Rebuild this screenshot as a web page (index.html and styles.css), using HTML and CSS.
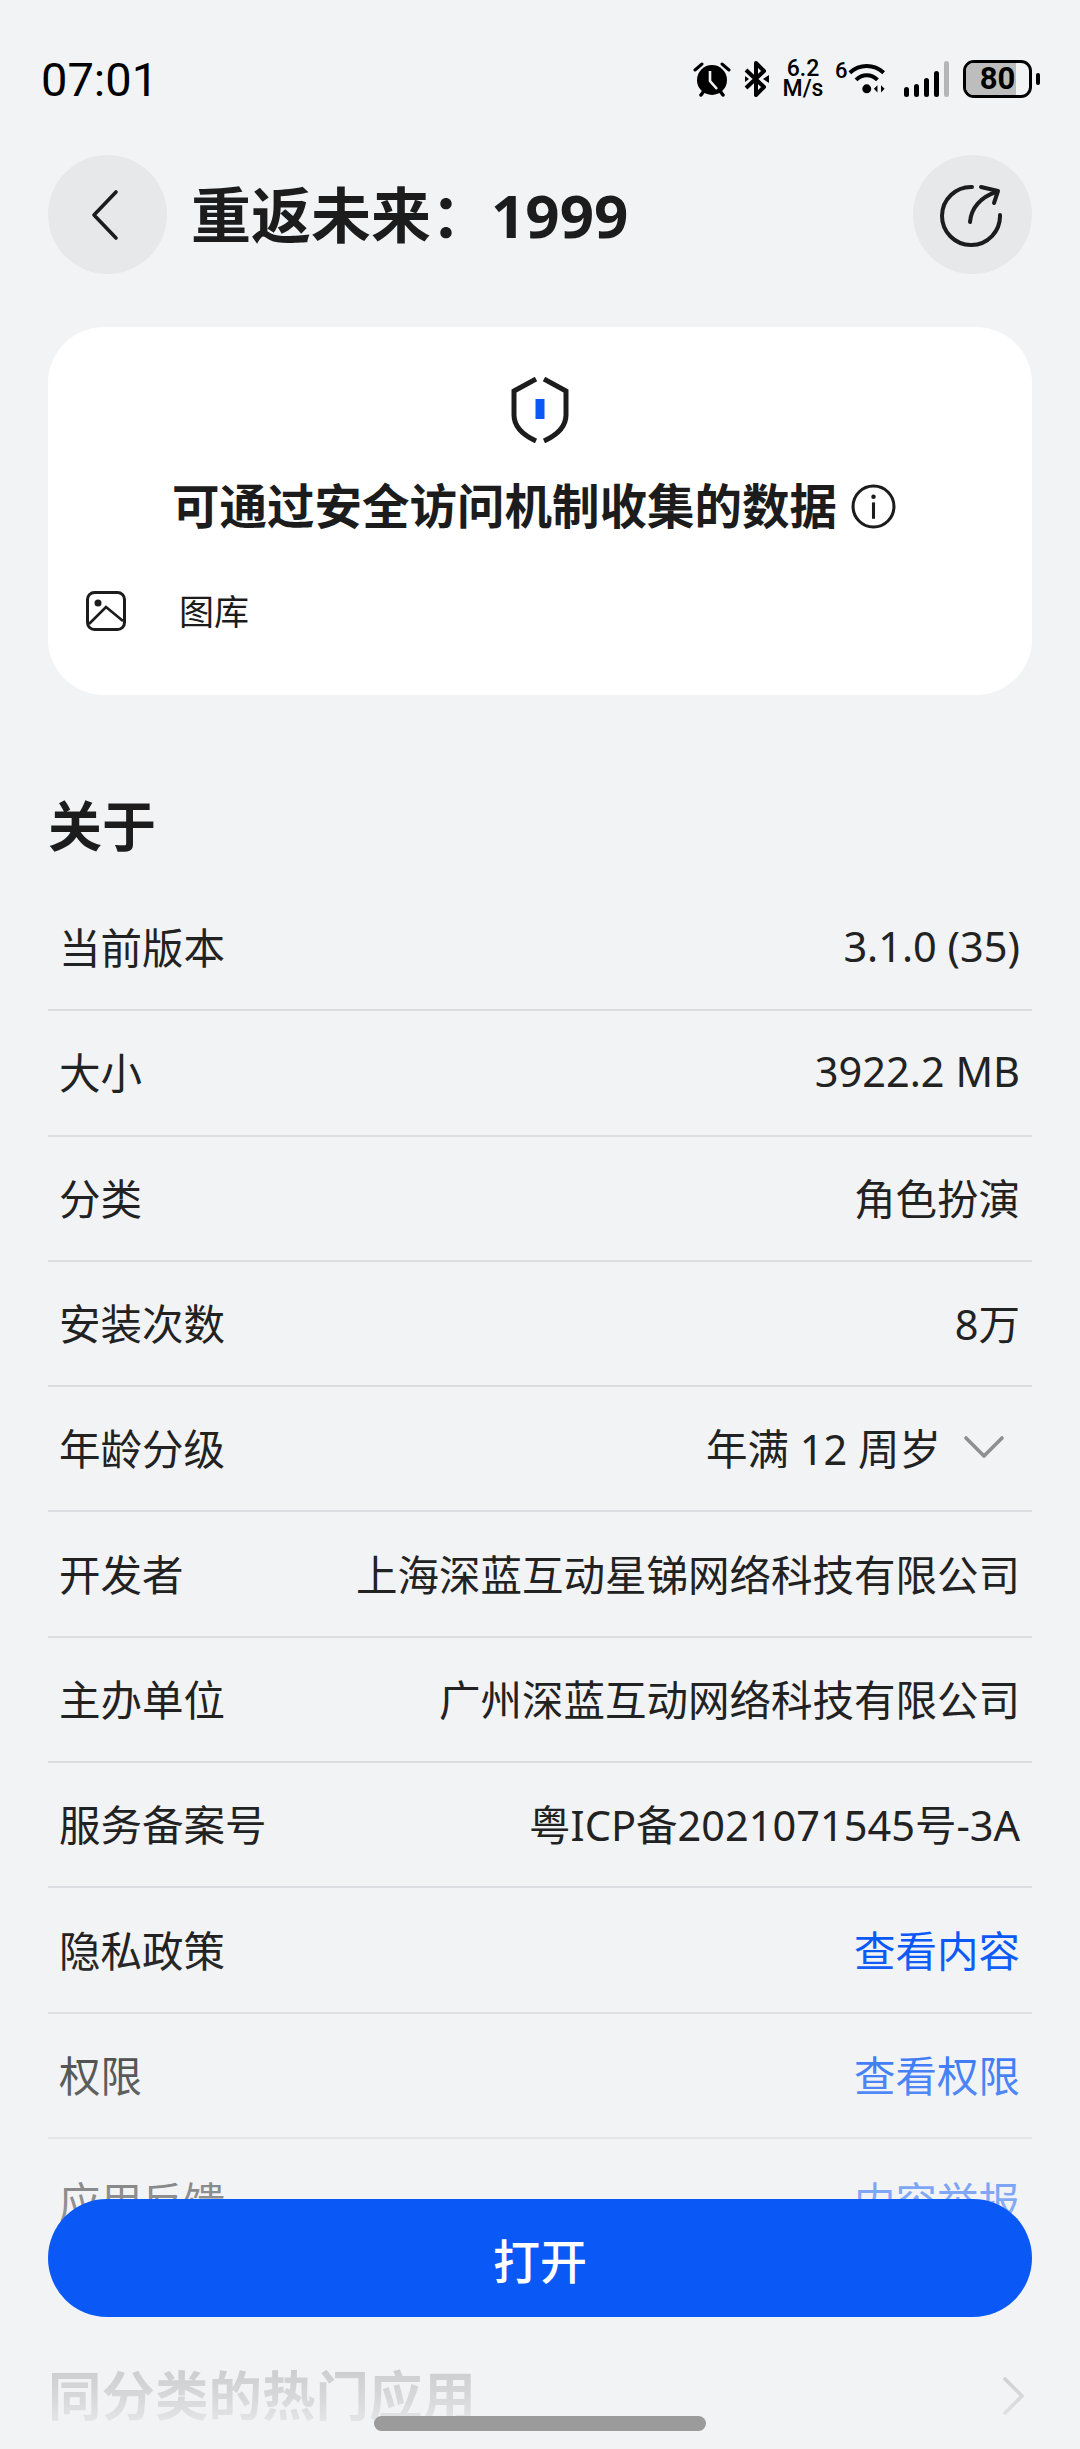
FILE: index.html
```html
<!DOCTYPE html>
<html lang="zh-CN">
<head>
  <meta charset="UTF-8" />
  <meta name="viewport" content="width=device-width, initial-scale=1.0"/>
  <title>重返未来：1999</title>
  <link rel="stylesheet" href="styles.css">
</head>
<body>
  <div class="page">
    <header class="status-bar">
      <span class="time">07:01</span>
      <div class="status-icons">
        <svg class="ic-alarm" viewBox="0 0 38 36">
          <path d="M2 9 L9 3 M36 9 L29 3" stroke="#000" stroke-width="3" stroke-linecap="round"/>
          <circle cx="19" cy="19" r="15" fill="#000"/>
          <path d="M8 34 L11 30 M30 34 L27 30" stroke="#000" stroke-width="3.5" stroke-linecap="round"/>
          <path d="M17 10 V20 L24 28" fill="none" stroke="#f1f3f5" stroke-width="2.6"/>
        </svg>
        <svg class="ic-bt" viewBox="0 0 27 36">
          <path d="M3 9 L21 26 L13 34 V2 L21 10 L3 27" fill="none" stroke="#000" stroke-width="4" stroke-linejoin="round"/>
          <path d="M20 18 L26 14 V22 Z M2 15 L6 18 L2 21 Z" fill="#000"/>
        </svg>
        <div class="speed"><span>6.2</span><span>M/s</span></div>
        <div class="wifi">
          <span class="wifi-six">6</span>
          <svg class="ic-wifi" viewBox="0 0 42 36">
            <path d="M2 11 C13 1 29 1 40 11" fill="none" stroke="#000" stroke-width="4.5"/>
            <path d="M9 19 C16 12 26 12 33 19" fill="none" stroke="#000" stroke-width="4.5"/>
            <circle cx="21" cy="29" r="5" fill="#000"/>
            <path d="M29 29 L33 25 V33 Z M41 29 L37 25 V33 Z" fill="#000"/>
          </svg>
        </div>
        <div class="signal">
          <i class="bar-1"></i><i class="bar-2"></i><i class="bar-3"></i><i class="bar-4"></i><i class="bar-5"></i>
        </div>
        <div class="battery">
          <div class="battery-body"><span class="battery-fill"></span><span class="battery-num">80</span></div>
          <i class="battery-nub"></i>
        </div>
      </div>
    </header>

    <div class="title-bar">
      <button class="round-btn">
        <svg width="30" height="52" viewBox="0 0 30 52"><path d="M26 3 L4 26 L26 49" fill="none" stroke="#1c1c1c" stroke-width="3.6" stroke-linecap="round" stroke-linejoin="round"/></svg>
      </button>
      <h1>重返未来：1999</h1>
      <button class="round-btn share-btn">
        <svg width="64" height="64" viewBox="0 0 64 64">
          <path d="M33 4 A29 29 0 1 0 61 32" fill="none" stroke="#1c1c1c" stroke-width="4" stroke-linecap="round"/>
          <path d="M31 39 C32 25 42 14 57 9" fill="none" stroke="#1c1c1c" stroke-width="4" stroke-linecap="round"/>
          <path d="M42 4 L59 8 L55 20" fill="none" stroke="#1c1c1c" stroke-width="4" stroke-linecap="round" stroke-linejoin="round"/>
        </svg>
      </button>
    </div>

    <section class="safety-card">
      <svg class="ic-shield" viewBox="0 0 58 66">
        <path d="M25 2 L3 14 V38 C3 49 12 58 25 64 M33 2 L55 14 V38 C55 49 46 58 33 64" fill="none" stroke="#1c1c1c" stroke-width="5"/>
        <rect x="24.5" y="22" width="9" height="20" fill="#0a59f7"/>
      </svg>
      <h2>可通过安全访问机制收集的数据
        <svg class="ic-info" viewBox="0 0 44 44">
          <circle cx="22" cy="22" r="20" fill="none" stroke="#1c1c1c" stroke-width="3"/>
          <rect x="20.5" y="18" width="3" height="16" fill="#1c1c1c"/>
          <circle cx="22" cy="12.5" r="2.2" fill="#1c1c1c"/>
        </svg>
      </h2>
      <div class="safety-item">
        <svg class="ic-image" viewBox="0 0 40 40">
          <rect x="1.5" y="1.5" width="37" height="37" rx="7" fill="none" stroke="#1c1c1c" stroke-width="3"/>
          <circle cx="12" cy="12" r="3.5" fill="#1c1c1c"/>
          <path d="M3 33 L20 16 L37 30" fill="none" stroke="#1c1c1c" stroke-width="2.6"/>
        </svg>
        <span>图库</span>
      </div>
    </section>

    <h3 class="about-title">关于</h3>
    <div class="info-list">
      <div class="info-row"><span>当前版本</span><span>3.1.0 (35)</span></div>
      <div class="info-row"><span>大小</span><span>3922.2 MB</span></div>
      <div class="info-row"><span>分类</span><span>角色扮演</span></div>
      <div class="info-row"><span>安装次数</span><span>8万</span></div>
      <div class="info-row">
        <span>年龄分级</span>
        <span class="age">年满 12 周岁
          <svg width="42" height="24" viewBox="0 0 42 24"><path d="M3 3 L21 21 L39 3" fill="none" stroke="#8f8f8f" stroke-width="3.6" stroke-linecap="round" stroke-linejoin="round"/></svg>
        </span>
      </div>
      <div class="info-row"><span>开发者</span><span>上海深蓝互动星锑网络科技有限公司</span></div>
      <div class="info-row"><span>主办单位</span><span>广州深蓝互动网络科技有限公司</span></div>
      <div class="info-row"><span>服务备案号</span><span>粤ICP备2021071545号-3A</span></div>
      <div class="info-row"><span>隐私政策</span><span class="link">查看内容</span></div>
      <div class="info-row"><span>权限</span><span class="link">查看权限</span></div>
      <div class="info-row no-line"><span>应用反馈</span><span class="link">内容举报</span></div>
    </div>

    <div class="hot-head">
      <h3>同分类的热门应用</h3>
      <svg width="24" height="40" viewBox="0 0 24 40"><path d="M3 3 L20 20 L3 37" fill="none" stroke="#1c1c1c" stroke-width="3.6" stroke-linecap="round" stroke-linejoin="round"/></svg>
    </div>

    <div class="bottom-fade"></div>
    <button class="open-btn">打开</button>
    <div class="home-bar"></div>
  </div>
</body>
</html>
```

FILE: styles.css
```css
* {
  margin: 0;
  padding: 0;
  box-sizing: border-box;
}

body {
  background-color: #f1f3f5;
  color: #1c1c1c;
  font-family: "Noto Sans", "Noto Sans CJK SC", sans-serif;
}

.page {
  position: relative;
  height: 2449px;
  overflow: hidden;
  padding: 0 48px;
}

/* status bar */
.status-bar {
  display: flex;
  justify-content: space-between;
  align-items: center;
  height: 155px;
  margin: 0 -8px 0 -7px;
  padding-top: 3px;
}

.time {
  font-family: Roboto, sans-serif;
  font-size: 47px;
  letter-spacing: 0;
  color: #000;
}

.status-icons {
  display: flex;
  align-items: center;
  height: 40px;
}

.ic-alarm {
  width: 38px;
  height: 36px;
  margin-right: 12px;
}

.ic-bt {
  width: 27px;
  height: 36px;
  margin-right: 13px;
}

.speed {
  display: flex;
  flex-direction: column;
  align-items: center;
  width: 40px;
  margin-right: 12px;
  font-family: Roboto, sans-serif;
  font-size: 23px;
  font-weight: 500;
  line-height: 20px;
  color: #000;
}

.wifi {
  display: flex;
  align-items: flex-start;
  width: 50px;
  height: 36px;
  margin-right: 19px;
}

.wifi-six {
  font-family: Roboto, sans-serif;
  font-size: 22px;
  font-weight: 500;
  line-height: 20px;
  color: #000;
}

.ic-wifi {
  width: 38px;
  height: 36px;
}

.signal {
  display: flex;
  align-items: flex-end;
  gap: 5px;
  height: 36px;
  margin-right: 14px;
}

.signal i {
  display: block;
  width: 5px;
  border-radius: 3px;
  background: #000;
}

.bar-1 { height: 10px; }
.bar-2 { height: 13px; }
.bar-3 { height: 19px; }
.bar-4 { height: 26px; }
.signal .bar-5 { height: 36px; background: #b5b5b5; }

.battery {
  display: flex;
  align-items: center;
  gap: 4px;
}

.battery-body {
  position: relative;
  width: 69px;
  height: 38px;
  border: 3px solid #000;
  border-radius: 11px;
  overflow: hidden;
}

.battery-fill {
  position: absolute;
  left: 0;
  top: 0;
  bottom: 0;
  width: 80%;
  background: #bdbdbd;
}

.battery-num {
  position: relative;
  display: block;
  text-align: center;
  font-family: Roboto, sans-serif;
  font-size: 31px;
  font-weight: 700;
  line-height: 32px;
  color: #000;
}

.battery-nub {
  display: block;
  width: 4px;
  height: 12px;
  border-radius: 2px;
  background: #000;
}

/* title */
.title-bar {
  display: flex;
  align-items: center;
  height: 119px;
}

.round-btn {
  display: flex;
  align-items: center;
  justify-content: center;
  flex: none;
  width: 119px;
  height: 119px;
  border: none;
  border-radius: 50%;
  background: #e7e8ea;
  padding-right: 6px;
}

.share-btn {
  padding-right: 3px;
}

.title-bar h1 {
  flex: 1;
  margin-left: 24px;
  font-size: 60px;
  font-weight: 700;
  line-height: 70px;
}

/* card */
.safety-card {
  height: 368px;
  margin-top: 53px;
  padding-top: 50px;
  background: #fff;
  border-radius: 56px;
  text-align: center;
}

.ic-shield {
  display: block;
  width: 58px;
  height: 66px;
  margin: 0 auto;
}

.safety-card h2 {
  display: flex;
  justify-content: center;
  align-items: center;
  gap: 14px;
  margin-top: 31px;
  padding-right: 12px;
  font-size: 47.5px;
  font-weight: 700;
  line-height: 64px;
}

.ic-info {
  width: 45px;
  height: 45px;
}

.safety-item {
  display: flex;
  align-items: center;
  gap: 53px;
  margin-top: 46px;
  padding-left: 38px;
  font-size: 35px;
}

.ic-image {
  width: 40px;
  height: 40px;
  margin-top: 3px;
}

/* about list */
.about-title {
  margin-top: 99px;
  font-size: 54px;
  font-weight: 700;
  line-height: 64px;
}

.info-list {
  margin-top: 28px;
}

.info-row {
  display: flex;
  justify-content: space-between;
  align-items: center;
  height: 125.3px;
  padding: 0 12px 3px 11px;
  border-bottom: 2px solid #dcdde0;
  font-size: 41.5px;
  color: #222;
}

.info-row.no-line {
  border-bottom: none;
}

.age {
  display: flex;
  align-items: center;
  gap: 22px;
  padding-right: 15px;
}

.link {
  color: #0a59f7;
}

/* hot apps */
.hot-head {
  display: flex;
  justify-content: space-between;
  align-items: center;
  margin-top: 102px;
  padding-right: 6px;
}

.hot-head h3 {
  font-size: 53.5px;
  font-weight: 700;
  line-height: 60px;
}

/* floating bottom */
.bottom-fade {
  position: absolute;
  left: 0;
  right: 0;
  bottom: 0;
  height: 500px;
  background: linear-gradient(to bottom, rgba(241, 243, 245, 0), rgba(241, 243, 245, 0.5) 48%, rgba(241, 243, 245, 0.88) 90%, #f1f3f5);
}

.open-btn {
  position: absolute;
  left: 48px;
  right: 48px;
  top: 2199px;
  height: 118px;
  border: none;
  border-radius: 59px;
  background: #0a59f7;
  color: #fff;
  font-family: "Noto Sans CJK SC", sans-serif;
  font-size: 47px;
  font-weight: 500;
}

.home-bar {
  position: absolute;
  left: 374px;
  top: 2416px;
  width: 332px;
  height: 15px;
  border-radius: 8px;
  background: #9b9b9b;
}
```
